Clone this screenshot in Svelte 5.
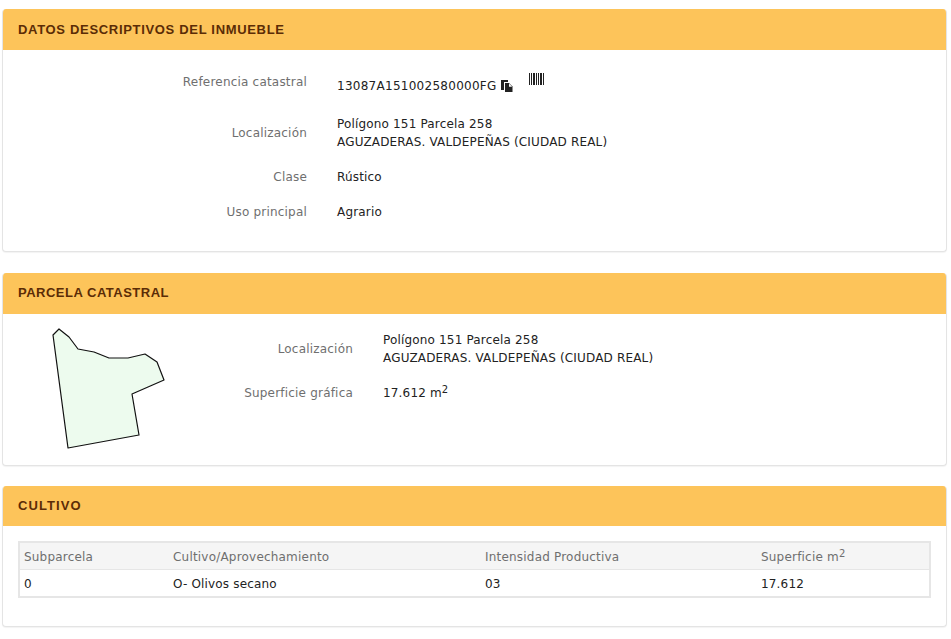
<script>
  const datos = [
    { label: 'Referencia catastral', lines: [], ref: '13087A151002580000FG' },
    { label: 'Localización', lines: ['Polígono 151 Parcela 258', 'AGUZADERAS. VALDEPEÑAS (CIUDAD REAL)'] },
    { label: 'Clase', lines: ['Rústico'] },
    { label: 'Uso principal', lines: ['Agrario'] }
  ];
  const bars = [[0,1],[2,1],[4,2],[7,1],[9,1],[11,2],[14,1]];
</script>

<div class="page">
  <section class="panel first">
    <h2>DATOS DESCRIPTIVOS DEL INMUEBLE</h2>
    <div class="body datos">
      {#each datos as d}
        <div class="row">
          <div class="lab">{d.label}</div>
          <div class="val">
            {#if d.ref}
              <span class="ref">{d.ref}</span>
              <svg class="copy" width="12" height="12" viewBox="0 0 12 12" aria-hidden="true">
                <path d="M0 0h7v2H3v8H0z" fill="#222" />
                <path d="M4 3h4l3.500 3.500V12H4z" fill="#222" />
                <path d="M8 3.500v3.200h3.200" fill="#fff" />
              </svg>
              <svg class="barcode" width="15" height="12" viewBox="0 0 15 12" aria-hidden="true">
                {#each bars as b}
                  <rect x={b[0]} y="0" width={b[1]} height="12" fill="#222" />
                {/each}
              </svg>
            {:else}
              {#each d.lines as l}<div>{l}</div>{/each}
            {/if}
          </div>
        </div>
      {/each}
    </div>
  </section>

  <section class="panel">
    <h2 class="up">PARCELA CATASTRAL</h2>
    <div class="body parcela">
      <svg class="plot" width="116" height="124" viewBox="50 326 116 124" aria-hidden="true">
        <path d="M58 329 L52 335 L67 448 L138 435 L131 394 L163 380 L156 362 L144 354 L127 358 L108 358 L93 352 L77 349 L68 337 Z"
          fill="#edfbee" stroke="#111" stroke-width="1.2" stroke-linejoin="round" />
      </svg>
      <div class="info">
        <div class="row">
          <div class="lab">Localización</div>
          <div class="val">
            <div>Polígono 151 Parcela 258</div>
            <div>AGUZADERAS. VALDEPEÑAS (CIUDAD REAL)</div>
          </div>
        </div>
        <div class="row">
          <div class="lab">Superficie gráfica</div>
          <div class="val">17.612 m<sup>2</sup></div>
        </div>
      </div>
    </div>
  </section>

  <section class="panel last">
    <h2 class="short">CULTIVO</h2>
    <div class="body cultivo">
      <table>
        <thead>
          <tr>
            <th class="c1">Subparcela</th>
            <th class="c2">Cultivo/Aprovechamiento</th>
            <th class="c3">Intensidad Productiva</th>
            <th>Superficie m<sup>2</sup></th>
          </tr>
        </thead>
        <tbody>
          <tr>
            <td>0</td>
            <td>O- Olivos secano</td>
            <td>03</td>
            <td>17.612</td>
          </tr>
        </tbody>
      </table>
    </div>
  </section>
</div>

<style>
  :global(body) { margin: 0; background: #fff; }
  .page {
    padding: 9px 4px 12px 2px;
    display: flex; flex-direction: column; gap: 21px;
    font: 12px/18px "DejaVu Sans", Verdana, sans-serif;
    letter-spacing: 0.17px;
    color: #222;
  }
  .panel {
    border: 1px solid #e4e4e4;
    border-top: 0;
    border-radius: 4px;
    box-shadow: 0 1px 1px rgba(0, 0, 0, 0.05);
    background: #fff;
    overflow: hidden;
  }
  .panel.last { margin-top: -1px; }
  h2 {
    margin: 0 -1px;
    height: 41px;
    padding: 0 16px;
    display: flex; align-items: center;
    background: #fdc45a;
    color: #5b2c06;
    font: bold 13px/18px "Liberation Sans", Arial, sans-serif;
    letter-spacing: 0.68px;
  }
  h2.up { box-sizing: border-box; padding-bottom: 2px; letter-spacing: 0.5px; }
  h2.short { height: 40px; letter-spacing: 1.1px; }
  .row { display: flex; align-items: center; }
  .lab { color: #6f6f6f; text-align: right; flex: none; letter-spacing: 0.2px; }
  .val { color: #222; }
  .datos { height: 201px; padding-top: 22px; box-sizing: border-box; }
  .datos .lab { width: 304px; margin-right: 30px; }
  .datos .row:nth-child(1) { height: 20px; margin-bottom: 23px; }
  .datos .row:nth-child(2) { height: 36px; margin-bottom: 17px; }
  .datos .row:nth-child(3) { height: 18px; margin-bottom: 17px; }
  .datos .row:nth-child(4) { height: 18px; }
  .ref { position: relative; top: 4px; letter-spacing: 0.27px; }
  .copy { position: relative; top: 6px; margin-left: 0; }
  .barcode { margin-left: 12px; position: relative; top: -1px; }
  .parcela { height: 151px; display: flex; box-sizing: border-box; padding: 12px 0 0 48px; }
  .plot { flex: none; display: block; }
  .info { padding-top: 5px; }
  .info .lab { width: 186px; margin-right: 30px; }
  .info .row:first-child { height: 36px; margin-bottom: 17px; }
  .info .row:last-child { height: 18px; }
  sup { font-size: 10px; line-height: 0; vertical-align: 4px; }
  .cultivo { height: 100px; box-sizing: border-box; padding: 15px 15px 0 15px; }
  table {
    width: 100%;
    border-collapse: collapse;
    border: 2px solid #e6e6e6;
  }
  th {
    background: #f5f5f5;
    color: #6f6f6f;
    font-weight: normal;
    text-align: left;
    height: 24px;
    padding: 2px 0 0 4px;
    border-bottom: 1px solid #e6e6e6;
    letter-spacing: 0.2px;
  }
  td { height: 24px; padding: 2px 0 0 4px; color: #222; }
  .c1 { width: 145px; }
  .c2 { width: 308px; }
  .c3 { width: 272px; }
</style>
